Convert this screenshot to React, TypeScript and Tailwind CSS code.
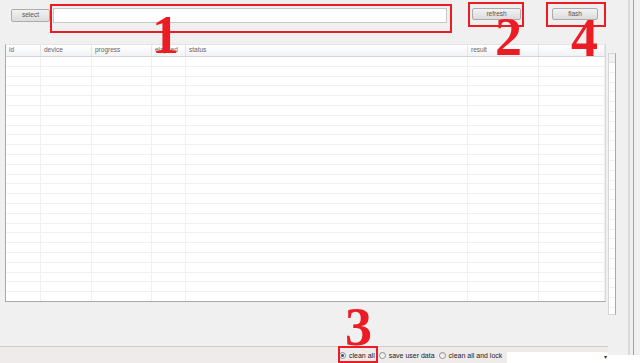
import React from 'react';

const columns = [
  { label: 'id', width: 'w-[35px]' },
  { label: 'device', width: 'w-[51px]' },
  { label: 'progress', width: 'w-[60px]' },
  { label: 'elapsed', width: 'w-[34px]' },
  { label: 'status', width: 'w-[282px]' },
  { label: 'result', width: 'w-[71px]' },
  { label: '', width: 'flex-1' },
];

const rows = Array.from({ length: 25 }, (_, i) => i);

function WinButton({ label, className }: { label: string; className: string }) {
  return (
    <button
      className={`flex items-center justify-center rounded-[2px] border border-[#acacac] bg-gradient-to-b from-[#f2f2f2] to-[#dcdcdc] text-[6.5px] leading-none text-[#555] ${className}`}
    >
      {label}
    </button>
  );
}

function Radio({ checked, label }: { checked?: boolean; label: string }) {
  return (
    <div className="flex items-center gap-[3px]">
      <span className="flex h-[7px] w-[7px] items-center justify-center rounded-full border border-[#8f8f8f] bg-gradient-to-b from-[#e6e6e6] to-[#ffffff]">
        {checked && <span className="h-[3px] w-[3px] rounded-full bg-[#2b4f8a]" />}
      </span>
      <span className="text-[7px] leading-none text-[#222]">{label}</span>
    </div>
  );
}

function Marker({ n, className }: { n: string; className: string }) {
  return (
    <span
      className={`pointer-events-none absolute text-[54px] font-bold leading-none text-[#ec1c24] ${className}`}
      style={{ fontFamily: '"Liberation Serif", serif' }}
    >
      {n}
    </span>
  );
}

export default function App() {
  return (
    <div
      className="relative flex h-[363px] w-[640px] overflow-hidden bg-[#f0f0f0]"
      style={{ fontFamily: '"Liberation Sans", Arial, sans-serif' }}
    >
      {/* Main column */}
      <div className="flex w-[608px] flex-col">
        {/* Toolbar */}
        <div className="flex h-[44px] items-start">
          <WinButton label="select" className="ml-[11px] mt-[9px] h-[13px] w-[39px]" />
          <div className="ml-[3px] mt-[8px] h-[15px] w-[394px] border border-[#c8c8c8] bg-white" />
          <WinButton label="refresh" className="ml-[25px] mt-[8px] h-[12px] w-[49px]" />
          <WinButton label="flash" className="ml-[31px] mt-[8px] h-[12px] w-[46px]" />
        </div>

        {/* Table */}
        <div className="ml-[5px] flex h-[258px] w-[601px] flex-col overflow-hidden border border-[#a9a9a9] border-r-[#d8d8d8] border-t-[#e4e4e4] bg-white">
          <div className="flex h-[12px] shrink-0 border-b border-[#d5d5d5] bg-gradient-to-b from-[#ffffff] to-[#f1f2f4]">
            {columns.map((c, i) => (
              <div
                key={i}
                className={`${c.width} flex items-center border-r border-[#e5e5e5] pl-[3px] text-[6.5px] leading-none text-[#666]`}
              >
                {c.label}
              </div>
            ))}
          </div>
          {rows.map((r) => (
            <div key={r} className="flex h-[9.8px] shrink-0 border-b border-[#f0f0f0]">
              {columns.map((c, i) => (
                <div key={i} className={`${c.width} border-r border-[#f0f0f0]`} />
              ))}
            </div>
          ))}
        </div>

        <div className="flex-1" />

        {/* Status bar */}
        <div className="flex h-[17px] items-center border-t border-[#cdcdcd] bg-[#efebeb] pl-[339px]">
          <Radio checked label="clean all" />
          <div className="ml-[4px]">
            <Radio label="save user data" />
          </div>
          <div className="ml-[4px]">
            <Radio label="clean all and lock" />
          </div>
          <div className="ml-[5px] mt-[4px] flex h-[11px] flex-1 items-center justify-end bg-white pr-[1px] text-[6px] leading-none text-[#333]">
            ▾
          </div>
        </div>
      </div>

      {/* Right edge: scrollbar strip and window borders */}
      <div className="flex flex-1 flex-col">
        <div className="flex flex-1">
          <div className="mt-[53px] flex h-[262px] w-[8px] flex-col overflow-hidden border border-[#d6d6d6] border-r-[#a8a8a8] bg-white">
            <div className="h-[9px] shrink-0 border-b border-[#e0e0e0] bg-[#f1f2f4]" />
            {rows.map((r) => (
              <div key={r} className="h-[9.8px] shrink-0 border-b border-[#f0f0f0]" />
            ))}
          </div>
          <div className="ml-[12px] w-[2px] bg-[#dadada]" />
          <div className="ml-[3px] w-[1px] bg-[#a0a0a0]" />
        </div>
        <div className="h-[8px] bg-white" />
      </div>

      {/* Annotation overlays */}
      <div className="pointer-events-none absolute left-[50px] top-[4px] h-[29px] w-[402px] border-2 border-[#ec1c24]" />
      <div className="pointer-events-none absolute left-[468px] top-[2px] h-[25px] w-[56px] border-2 border-[#ec1c24]" />
      <div className="pointer-events-none absolute left-[546px] top-[2px] h-[25px] w-[60px] border-2 border-[#ec1c24]" />
      <div className="pointer-events-none absolute left-[338px] top-[346px] h-[17px] w-[40px] border-2 border-[#ec1c24]" />

      <Marker n="1" className="left-[152px] top-[8px]" />
      <Marker n="2" className="left-[495px] top-[10px]" />
      <Marker n="4" className="left-[571px] top-[11px]" />
      <Marker n="3" className="left-[345px] top-[300px]" />
    </div>
  );
}
